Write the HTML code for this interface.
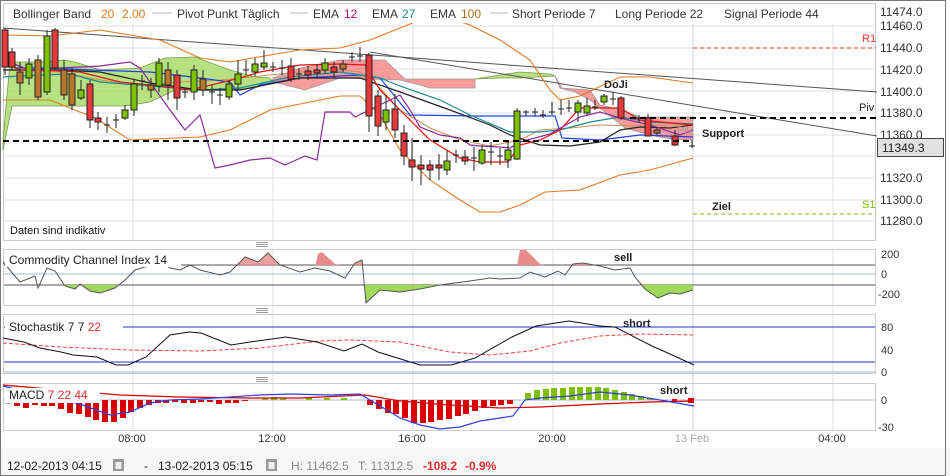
<!DOCTYPE html>
<html><head><meta charset="utf-8"><style>
html,body{margin:0;padding:0;background:#fff}
svg{display:block;font-family:"Liberation Sans",Arial,sans-serif}
</style></head><body>
<svg width="950" height="476" viewBox="0 0 950 476" xmlns="http://www.w3.org/2000/svg">
<rect x="0" y="0" width="950" height="476" fill="#fff"/>
<rect x="0" y="448" width="950" height="28" fill="#f6f6f6"/>
<rect x="0.5" y="0.5" width="945" height="475" fill="none" stroke="#777"/>
<rect x="3.5" y="3.5" width="872" height="237" fill="none" stroke="#ccc"/>
<g stroke="#e2e2e2" stroke-width="1">
<line x1="4" y1="26" x2="875" y2="26"/><line x1="4" y1="48" x2="875" y2="48"/><line x1="4" y1="69" x2="875" y2="69"/><line x1="4" y1="91" x2="875" y2="91"/><line x1="4" y1="113" x2="875" y2="113"/><line x1="4" y1="135" x2="875" y2="135"/><line x1="4" y1="156" x2="875" y2="156"/><line x1="4" y1="178" x2="875" y2="178"/><line x1="4" y1="200" x2="875" y2="200"/><line x1="4" y1="221" x2="875" y2="221"/>
<line x1="133" y1="24" x2="133" y2="240"/><line x1="273" y1="24" x2="273" y2="240"/><line x1="413" y1="24" x2="413" y2="240"/><line x1="553" y1="24" x2="553" y2="240"/><line x1="833" y1="24" x2="833" y2="240"/>
<line x1="133" y1="249" x2="133" y2="430"/><line x1="273" y1="249" x2="273" y2="430"/><line x1="413" y1="249" x2="413" y2="430"/><line x1="553" y1="249" x2="553" y2="430"/><line x1="833" y1="249" x2="833" y2="430"/>
</g>
<line x1="693" y1="24" x2="693" y2="430" stroke="#d0d0d0"/>
<polygon fill="#9fd85a" fill-opacity="0.75" stroke="#7a9a4a" stroke-width="0.8" points="3,140 10,62 40,62 65,60 75,62 100,70 140,68 150,64 165,58 195,57 230,70 255,77 270,78 273,82 255,88 230,90 200,90 175,90 150,102 125,106 12,106 3,150"/>
<polygon fill="#f47a7a" fill-opacity="0.75" stroke="#999" stroke-width="0.8" points="273,78 300,68 340,60 385,60 405,79 475,79 475,88 445,88 430,88 420,85 400,80 340,78 305,90 273,82"/>
<polygon fill="#9fd85a" fill-opacity="0.75" stroke="#7a9a4a" stroke-width="0.8" points="475,79 500,75 520,72 550,74 555,76 520,78 500,78"/>
<polygon fill="#f47a7a" fill-opacity="0.75" stroke="#999" stroke-width="0.8" points="555,76 562,88 590,90 600,105 622,110 640,117 693,117 693,140 670,139 650,135 625,128 605,112 590,100 575,92 560,88"/>
<line x1="3" y1="28" x2="877" y2="92" stroke="#555" stroke-width="1"/>
<line x1="370" y1="52" x2="877" y2="136" stroke="#555" stroke-width="1"/>
<g fill="none" stroke="#e07a20" stroke-width="1.1">
<polyline points="3,35 50,36 100,30 160,40 200,58 230,62 270,55 300,50 340,48 370,40 400,28 420,20 440,15 470,25 500,40 530,60 550,90 560,100 580,96 620,77 650,77 693,83"/>
<polyline points="3,100 50,100 95,118 130,140 200,137 230,130 270,110 300,104 340,96 360,96 380,115 400,150 430,180 460,200 480,212 500,212 520,205 545,192 580,190 620,175 650,170 693,158"/>
<polyline stroke="#c8945a" points="3,70 60,72 100,80 140,85 180,82 220,80 260,76 300,72 340,70 360,72 380,88 400,110 430,128 460,140 490,146 520,140 540,130 570,128 600,125 640,126 693,124"/>
</g>
<g fill="none" stroke-width="1.2">
<polyline stroke="#2040f0" points="3,50 15,68 50,68 90,70 150,72 200,78 230,82 240,95 260,85 300,78 360,75 380,78 410,115 475,116 555,116 562,138 600,140 640,135 693,137"/>
<polyline stroke="#1a8a90" points="3,77 40,75 70,74 100,82 150,86 200,90 240,88 290,77 340,72 380,78 400,86 440,100 470,115 510,132 540,132 560,130 590,122 620,117 650,122 693,124"/>
<polyline stroke="#222" points="3,70 60,70 100,72 150,83 200,90 240,90 270,84 300,78 360,78 400,92 450,110 490,125 510,135 540,145 570,146 600,142 620,130 640,127 670,128 693,125"/>
<polyline stroke="#f01010" points="3,62 20,70 40,70 80,72 120,82 160,86 190,90 240,78 260,72 300,65 340,64 365,65 380,90 400,110 430,140 460,158 480,162 508,162 520,145 540,140 560,130 580,108 620,108 640,120 693,125"/>
<polyline stroke="#8a2a9a" points="3,60 30,70 60,68 100,66 130,62 140,68 170,110 185,130 200,115 215,168 230,165 250,160 270,158 285,165 305,156 317,160 325,112 350,112 355,117 390,100 400,95 410,110 420,127 440,135 460,138 470,145 480,146 500,147 510,148 520,142 550,134 580,117 600,112 620,118 650,125 680,135 693,130"/>
</g>
<g stroke="#222" stroke-width="1">
<line x1="5" y1="28" x2="5" y2="75"/><rect x="2" y="30" width="6" height="37" fill="#e8383a"/>
<line x1="12" y1="48" x2="12" y2="70"/><rect x="9" y="52" width="6" height="15" fill="#e8383a"/>
<line x1="20" y1="62" x2="20" y2="95"/><rect x="17" y="72" width="6" height="11" fill="#b8762a"/>
<line x1="29" y1="58" x2="29" y2="85"/><rect x="26" y="64" width="6" height="14" fill="#7cc000"/>
<line x1="38" y1="55" x2="38" y2="100"/><rect x="35" y="60" width="6" height="37" fill="#b8762a"/>
<line x1="47" y1="30" x2="47" y2="95"/><rect x="44" y="36" width="6" height="56" fill="#7cc000"/>
<line x1="55" y1="28" x2="55" y2="70"/><rect x="52" y="30" width="6" height="38" fill="#e8383a"/>
<line x1="64" y1="60" x2="64" y2="100"/><rect x="61" y="70" width="6" height="25" fill="#b8762a"/>
<line x1="72" y1="68" x2="72" y2="110"/><rect x="69" y="74" width="6" height="31" fill="#b8762a"/>
<line x1="81" y1="80" x2="81" y2="100"/><rect x="78" y="90" width="6" height="8" fill="#7cc000"/>
<line x1="90" y1="80" x2="90" y2="128"/><rect x="87" y="84" width="6" height="36" fill="#e8383a"/>
<line x1="98" y1="112" x2="98" y2="130"/><rect x="95" y="118" width="6" height="4" fill="#e8383a"/>
<line x1="107" y1="117" x2="107" y2="133"/><line x1="104" y1="125" x2="110" y2="125"/>
<line x1="116" y1="114" x2="116" y2="128"/><line x1="113" y1="120" x2="119" y2="120"/>
<line x1="125" y1="105" x2="125" y2="120"/><rect x="122" y="110" width="6" height="8" fill="#7cc000"/>
<line x1="134" y1="80" x2="134" y2="116"/><rect x="131" y="84" width="6" height="26" fill="#7cc000"/>
<line x1="142" y1="75" x2="142" y2="90"/><line x1="139" y1="81" x2="145" y2="81"/>
<line x1="151" y1="78" x2="151" y2="98"/><rect x="148" y="85" width="6" height="5" fill="#b8762a"/>
<line x1="159" y1="58" x2="159" y2="92"/><rect x="156" y="63" width="6" height="23" fill="#7cc000"/>
<line x1="168" y1="62" x2="168" y2="100"/><rect x="165" y="70" width="6" height="15" fill="#b8762a"/>
<line x1="177" y1="70" x2="177" y2="110"/><rect x="174" y="75" width="6" height="23" fill="#e8383a"/>
<line x1="185" y1="88" x2="185" y2="98"/><line x1="182" y1="92" x2="188" y2="92"/>
<line x1="194" y1="65" x2="194" y2="100"/><rect x="191" y="70" width="6" height="22" fill="#7cc000"/>
<line x1="203" y1="70" x2="203" y2="96"/><rect x="200" y="79" width="6" height="11" fill="#b8762a"/>
<line x1="212" y1="85" x2="212" y2="104"/><line x1="209" y1="92" x2="215" y2="92"/>
<line x1="220" y1="88" x2="220" y2="105"/><line x1="217" y1="95" x2="223" y2="95"/>
<line x1="229" y1="80" x2="229" y2="100"/><rect x="226" y="84" width="6" height="13" fill="#7cc000"/>
<line x1="238" y1="60" x2="238" y2="90"/><rect x="235" y="74" width="6" height="10" fill="#7cc000"/>
<line x1="246" y1="60" x2="246" y2="75"/><line x1="243" y1="70" x2="249" y2="70"/>
<line x1="255" y1="58" x2="255" y2="76"/><rect x="252" y="64" width="6" height="8" fill="#7cc000"/>
<line x1="264" y1="50" x2="264" y2="70"/><rect x="261" y="63" width="6" height="4" fill="#7cc000"/>
<line x1="273" y1="62" x2="273" y2="72"/><line x1="270" y1="67" x2="276" y2="67"/>
<line x1="282" y1="60" x2="282" y2="75"/><line x1="279" y1="68" x2="285" y2="68"/>
<line x1="291" y1="58" x2="291" y2="82"/><rect x="288" y="66" width="6" height="13" fill="#e8383a"/>
<line x1="299" y1="68" x2="299" y2="80"/><line x1="296" y1="74" x2="302" y2="74"/>
<line x1="308" y1="66" x2="308" y2="80"/><rect x="305" y="71" width="6" height="4" fill="#e8383a"/>
<line x1="317" y1="64" x2="317" y2="77"/><rect x="314" y="70" width="6" height="3" fill="#e8383a"/>
<line x1="325" y1="58" x2="325" y2="74"/><rect x="322" y="63" width="6" height="7" fill="#7cc000"/>
<line x1="334" y1="62" x2="334" y2="78"/><rect x="331" y="67" width="6" height="5" fill="#e8383a"/>
<line x1="343" y1="60" x2="343" y2="72"/><rect x="340" y="64" width="6" height="5" fill="#b8762a"/>
<line x1="352" y1="52" x2="352" y2="62"/><line x1="349" y1="57" x2="355" y2="57"/>
<line x1="360" y1="47" x2="360" y2="62"/><line x1="357" y1="56" x2="363" y2="56"/>
<line x1="369" y1="53" x2="369" y2="132"/><rect x="366" y="55" width="6" height="61" fill="#e8383a"/>
<line x1="378" y1="90" x2="378" y2="136"/><rect x="375" y="96" width="6" height="30" fill="#e8383a"/>
<line x1="386" y1="95" x2="386" y2="130"/><rect x="383" y="110" width="6" height="12" fill="#7cc000"/>
<line x1="395" y1="94" x2="395" y2="138"/><rect x="392" y="109" width="6" height="21" fill="#e8383a"/>
<line x1="404" y1="125" x2="404" y2="165"/><rect x="401" y="133" width="6" height="23" fill="#e8383a"/>
<line x1="412" y1="138" x2="412" y2="181"/><rect x="409" y="160" width="6" height="7" fill="#e8383a"/>
<line x1="421" y1="155" x2="421" y2="185"/><rect x="418" y="165" width="6" height="4" fill="#e8383a"/>
<line x1="430" y1="160" x2="430" y2="180"/><rect x="427" y="165" width="6" height="5" fill="#e8383a"/>
<line x1="439" y1="154" x2="439" y2="180"/><rect x="436" y="165" width="6" height="3" fill="#e8383a"/>
<line x1="447" y1="150" x2="447" y2="175"/><rect x="444" y="161" width="6" height="9" fill="#7cc000"/>
<line x1="456" y1="150" x2="456" y2="163"/><line x1="453" y1="155" x2="459" y2="155"/>
<line x1="465" y1="150" x2="465" y2="165"/><rect x="462" y="157" width="6" height="4" fill="#e8383a"/>
<line x1="474" y1="147" x2="474" y2="171"/><line x1="471" y1="158" x2="477" y2="158"/>
<line x1="482" y1="145" x2="482" y2="165"/><rect x="479" y="150" width="6" height="13" fill="#7cc000"/>
<line x1="491" y1="142" x2="491" y2="165"/><line x1="488" y1="152" x2="494" y2="152"/>
<line x1="500" y1="148" x2="500" y2="165"/><line x1="497" y1="156" x2="503" y2="156"/>
<line x1="508" y1="142" x2="508" y2="168"/><rect x="505" y="150" width="6" height="10" fill="#7cc000"/>
<line x1="517" y1="108" x2="517" y2="160"/><rect x="514" y="111" width="6" height="48" fill="#7cc000"/>
<line x1="526" y1="110" x2="526" y2="116"/><line x1="523" y1="112" x2="529" y2="112"/>
<line x1="535" y1="108" x2="535" y2="116"/><line x1="532" y1="112" x2="538" y2="112"/>
<line x1="543" y1="110" x2="543" y2="118"/><line x1="540" y1="115" x2="546" y2="115"/>
<line x1="552" y1="102" x2="552" y2="115"/><line x1="549" y1="112" x2="555" y2="112"/>
<line x1="561" y1="100" x2="561" y2="115"/><line x1="558" y1="109" x2="564" y2="109"/>
<line x1="569" y1="100" x2="569" y2="112"/><line x1="566" y1="108" x2="572" y2="108"/>
<line x1="578" y1="100" x2="578" y2="122"/><rect x="575" y="103" width="6" height="9" fill="#7cc000"/>
<line x1="587" y1="98" x2="587" y2="115"/><rect x="584" y="106" width="6" height="7" fill="#7cc000"/>
<line x1="595" y1="100" x2="595" y2="110"/><line x1="592" y1="107" x2="598" y2="107"/>
<line x1="604" y1="94" x2="604" y2="105"/><rect x="601" y="96" width="6" height="6" fill="#7cc000"/>
<line x1="613" y1="92" x2="613" y2="105"/><line x1="610" y1="99" x2="616" y2="99"/>
<line x1="621" y1="96" x2="621" y2="120"/><rect x="618" y="98" width="6" height="20" fill="#e8383a"/>
<line x1="639" y1="115" x2="639" y2="122"/><line x1="636" y1="118" x2="642" y2="118"/>
<line x1="648" y1="114" x2="648" y2="136"/><rect x="645" y="118" width="6" height="18" fill="#e8383a"/>
<line x1="657" y1="127" x2="657" y2="135"/><rect x="654" y="130" width="6" height="3" fill="#b8762a"/>
<line x1="675" y1="130" x2="675" y2="146"/><rect x="672" y="136" width="6" height="9" fill="#e8383a"/>
<line x1="692" y1="140" x2="692" y2="148"/><line x1="689" y1="146" x2="695" y2="146"/>
</g>
<line x1="3" y1="141" x2="693" y2="141" stroke="#000" stroke-width="2" stroke-dasharray="6,4"/>
<line x1="630" y1="118" x2="876" y2="118" stroke="#000" stroke-width="2" stroke-dasharray="6,4"/>
<line x1="693" y1="48" x2="876" y2="48" stroke="#f03030" stroke-dasharray="4,3"/>
<line x1="693" y1="214" x2="876" y2="214" stroke="#7cc000" stroke-dasharray="4,3"/>
<g font-size="11">
<text x="862" y="42" fill="#f03030">R1</text>
<text x="859" y="111" fill="#222">Piv</text>
<text x="862" y="208" fill="#7cc000">S1</text>
<text x="677" y="134" fill="#999">Piv</text>
<text x="702" y="137" fill="#222" font-weight="bold">Support</text>
<text x="712" y="210" fill="#222" font-weight="bold">Ziel</text>
<text x="604" y="88" fill="#222" font-weight="bold">DoJi</text>
<text x="10" y="234" fill="#111">Daten sind indikativ</text>
</g>
<rect x="4" y="4" width="690" height="19" fill="#fff"/>
<g font-size="12" fill="#333">
<text x="13" y="18">Bollinger Band</text><text x="101" y="18" fill="#e07a20">20</text><text x="122" y="18" fill="#e07a20">2.00</text>
<line x1="152" y1="13" x2="172" y2="13" stroke="#bbb"/>
<text x="177" y="18">Pivot Punkt  Täglich</text>
<line x1="290" y1="13" x2="308" y2="13" stroke="#bbb"/>
<text x="313" y="18">EMA</text><text x="344" y="18" fill="#b01060">12</text>
<text x="372" y="18">EMA</text><text x="402" y="18" fill="#1a8a90">27</text>
<text x="430" y="18">EMA</text><text x="461" y="18" fill="#a86a20">100</text>
<line x1="490" y1="13" x2="508" y2="13" stroke="#bbb"/>
<text x="512" y="18">Short Periode  7</text>
<text x="615" y="18">Long Periode  22</text>
<text x="724" y="18">Signal Periode  44</text>
</g>
<g font-size="12" fill="#333">
<text x="880" y="16">11474.0</text><text x="880" y="30">11460.0</text><text x="880" y="52">11440.0</text><text x="880" y="74">11420.0</text><text x="880" y="96">11400.0</text><text x="880" y="117">11380.0</text><text x="880" y="139">11360.0</text><text x="880" y="182">11320.0</text><text x="880" y="204">11300.0</text><text x="880" y="225">11280.0</text>
</g>
<rect x="877.5" y="138.5" width="66" height="18" fill="#e2e2e2" stroke="#444"/>
<text x="882" y="152" font-size="12" fill="#222">11349.3</text>
<g stroke="#999" stroke-width="1"><line x1="256" y1="242.5" x2="268" y2="242.5"/><line x1="256" y1="244.5" x2="268" y2="244.5"/><line x1="256" y1="246.5" x2="268" y2="246.5"/>
<line x1="256" y1="308.5" x2="268" y2="308.5"/><line x1="256" y1="310.5" x2="268" y2="310.5"/><line x1="256" y1="312.5" x2="268" y2="312.5"/>
<line x1="256" y1="377.5" x2="268" y2="377.5"/><line x1="256" y1="379.5" x2="268" y2="379.5"/><line x1="256" y1="381.5" x2="268" y2="381.5"/></g>
<rect x="3.5" y="249.5" width="872" height="56" fill="none" stroke="#ccc"/>
<line x1="4" y1="274" x2="875" y2="274" stroke="#a8b8d8"/>
<line x1="4" y1="265" x2="875" y2="265" stroke="#555"/>
<line x1="4" y1="285" x2="875" y2="285" stroke="#555"/>
<defs>
<clipPath id="ab"><rect x="0" y="240" width="900" height="25"/></clipPath>
<clipPath id="be"><rect x="0" y="285" width="900" height="25"/></clipPath>
</defs>
<polygon clip-path="url(#ab)" fill="#e88a8a" fill-opacity="0.8" points="3,262 20,282 35,276 38,288 47,268 55,271 65,286 75,289 80,284 90,291 100,293 115,288 125,280 135,270 145,267 155,264 162,262 170,268 180,270 190,265 200,270 220,275 230,272 245,257 258,262 268,253 280,265 300,272 315,268 330,271 345,278 355,263 362,260 366,303 380,290 400,292 420,289 440,285 455,283 470,281 490,278 500,279 520,278 530,272 545,277 558,271 565,275 573,264 583,263 600,266 615,270 630,268 635,277 645,289 658,298 670,293 680,294 693,290 693,265 3,265"/>
<polygon clip-path="url(#ab)" fill="#e88a8a" points="315,268 318,254 322,252 335,264 345,266"/>
<polygon clip-path="url(#ab)" fill="#e88a8a" points="517,266 520,250 526,250 540,264 550,266"/>
<polygon clip-path="url(#be)" fill="#9fd85a" points="3,262 20,282 35,276 38,288 47,268 55,271 65,286 75,289 80,284 90,291 100,293 115,288 125,280 135,270 145,267 155,264 162,262 170,268 180,270 190,265 200,270 220,275 230,272 245,257 258,262 268,253 280,265 300,272 315,268 330,271 345,278 355,263 362,260 366,303 380,290 400,292 420,289 440,285 455,283 470,281 490,278 500,279 520,278 530,272 545,277 558,271 565,275 573,264 583,263 600,266 615,270 630,268 635,277 645,289 658,298 670,293 680,294 693,290 693,285 3,285"/>
<polyline fill="none" stroke="#555" stroke-width="1" points="3,262 20,282 35,276 38,288 47,268 55,271 65,286 75,289 80,284 90,291 100,293 115,288 125,280 135,270 145,267 155,264 162,262 170,268 180,270 190,265 200,270 220,275 230,272 245,257 258,262 268,253 280,265 300,272 315,268 330,271 345,278 355,263 362,260 366,303 380,290 400,292 420,289 440,285 455,283 470,281 490,278 500,279 520,278 530,272 545,277 558,271 565,275 573,264 583,263 600,266 615,270 630,268 635,277 645,289 658,298 670,293 680,294 693,290"/>
<rect x="5" y="252" width="176" height="15" fill="#fff"/>
<text x="9" y="264" font-size="12" fill="#222">Commodity Channel Index  14</text>
<text x="614" y="261" font-size="11" font-weight="bold" fill="#222">sell</text>
<g font-size="11" fill="#333"><text x="881" y="258">200</text><text x="881" y="278">0</text><text x="878" y="298">-200</text></g>
<rect x="3.5" y="314.5" width="872" height="59" fill="none" stroke="#ccc"/>
<line x1="4" y1="327" x2="875" y2="327" stroke="#2030d0"/>
<line x1="4" y1="362" x2="875" y2="362" stroke="#2030d0"/>
<line x1="4" y1="372" x2="875" y2="372" stroke="#a8b8d8"/>
<polyline fill="none" stroke="#f04040" stroke-dasharray="4,2" points="3,343 60,347 130,350 200,351 260,348 320,341 350,340 400,342 450,352 490,355 530,351 560,343 600,336 640,334 694,335"/>
<polyline fill="none" stroke="#111" points="3,338 24,342 40,348 61,352 73,355 97,357 116,365 128,365 146,357 170,335 189,332 201,333 231,345 250,342 286,337 317,342 344,351 362,344 378,352 420,365 451,365 475,358 512,337 536,326 569,321 600,326 615,327 652,346 670,354 694,365"/>
<rect x="5" y="320" width="118" height="15" fill="#fff"/>
<text x="9" y="331" font-size="12" fill="#222">Stochastik  7  7  <tspan fill="#e03030">22</tspan></text>
<text x="623" y="327" font-size="11" font-weight="bold" fill="#222">short</text>
<g font-size="11" fill="#333"><text x="881" y="331">80</text><text x="881" y="354">40</text><text x="881" y="376">0</text></g>
<rect x="3.5" y="383.5" width="872" height="47" fill="none" stroke="#ccc"/>
<line x1="4" y1="400" x2="875" y2="400" stroke="#a8b8d8"/>
<g fill="#d80000">
<rect x="5" y="400" width="6" height="4" fill="#f0a0a0"/><rect x="14" y="400" width="6" height="6"/><rect x="23" y="400" width="6" height="8"/><rect x="32" y="400" width="6" height="5"/><rect x="41" y="400" width="6" height="6"/><rect x="49" y="400" width="6" height="6"/><rect x="58" y="400" width="6" height="9"/><rect x="67" y="400" width="6" height="13"/><rect x="76" y="400" width="6" height="14"/><rect x="85" y="400" width="6" height="17"/><rect x="93" y="400" width="6" height="20"/><rect x="102" y="400" width="6" height="22"/><rect x="111" y="400" width="6" height="22"/><rect x="120" y="400" width="6" height="18"/><rect x="128" y="400" width="6" height="12"/><rect x="137" y="400" width="6" height="8"/><rect x="146" y="400" width="6" height="5"/><rect x="155" y="400" width="6" height="3"/><rect x="163" y="400" width="6" height="3"/><rect x="172" y="400" width="6" height="2"/><rect x="181" y="400" width="6" height="3"/><rect x="190" y="400" width="6" height="3"/><rect x="198" y="400" width="6" height="2"/><rect x="207" y="400" width="6" height="2"/><rect x="216" y="400" width="6" height="4"/><rect x="225" y="400" width="6" height="3"/><rect x="233" y="400" width="6" height="3"/><rect x="242" y="400" width="6" height="1"/>
<rect x="367" y="400" width="6" height="5"/><rect x="376" y="400" width="6" height="9"/><rect x="385" y="400" width="6" height="13"/><rect x="393" y="400" width="6" height="14"/><rect x="402" y="400" width="6" height="18"/><rect x="411" y="400" width="6" height="23"/><rect x="420" y="400" width="6" height="23"/><rect x="428" y="400" width="6" height="22"/><rect x="437" y="400" width="6" height="20"/><rect x="446" y="400" width="6" height="19"/><rect x="455" y="400" width="6" height="16"/><rect x="463" y="400" width="6" height="14"/><rect x="472" y="400" width="6" height="11"/><rect x="481" y="400" width="6" height="8"/><rect x="490" y="400" width="6" height="6"/><rect x="498" y="400" width="6" height="5"/><rect x="507" y="400" width="6" height="4"/>
<rect x="672" y="399" width="5" height="3"/><rect x="688" y="398" width="6" height="5"/>
</g>
<g fill="#7cc000">
<rect x="262" y="398" width="6" height="2"/><rect x="271" y="397" width="6" height="3"/><rect x="280" y="398" width="6" height="2"/><rect x="306" y="398" width="6" height="2"/><rect x="324" y="398" width="6" height="2"/><rect x="341" y="398" width="6" height="2"/>
<rect x="525" y="393" width="6" height="7"/><rect x="534" y="390" width="6" height="10"/><rect x="543" y="389" width="6" height="11"/><rect x="551" y="388" width="6" height="12"/><rect x="560" y="388" width="6" height="12"/><rect x="569" y="387" width="6" height="13"/><rect x="577" y="387" width="6" height="13"/><rect x="586" y="387" width="6" height="13"/><rect x="595" y="387" width="6" height="13"/><rect x="603" y="388" width="6" height="12"/><rect x="612" y="390" width="6" height="10"/><rect x="621" y="392" width="6" height="8"/><rect x="629" y="394" width="6" height="6"/><rect x="638" y="396" width="6" height="4"/><rect x="647" y="398" width="6" height="2"/>
</g>
<polyline fill="none" stroke="#d80000" stroke-width="1.2" points="3,385 60,390 120,395 180,397 250,398 300,398 365,395 400,401 450,405 500,408 540,407 600,404 650,402 694,401"/>
<polyline fill="none" stroke="#3040e0" stroke-width="1.2" points="3,386 40,395 80,404 110,415 130,412 150,403 170,400 200,399 260,395 290,394 330,395 360,394 380,406 400,418 420,425 440,429 460,427 480,421 500,418 513,416 525,400 540,398 570,396 600,392 630,395 660,400 694,406"/>
<rect x="5" y="388" width="95" height="15" fill="#fff"/>
<text x="9" y="399" font-size="12" fill="#222">MACD  <tspan fill="#e03030">7  22  44</tspan></text>
<text x="660" y="394" font-size="11" font-weight="bold" fill="#222">short</text>
<g font-size="11" fill="#333"><text x="881" y="404">0</text><text x="878" y="431">-30</text></g>
<g font-size="11" fill="#333" text-anchor="middle">
<text x="132" y="442">08:00</text><text x="272" y="442">12:00</text><text x="412" y="442">16:00</text><text x="552" y="442">20:00</text><text x="692" y="442" fill="#aaa">13 Feb</text><text x="832" y="442">04:00</text>
</g>
<g font-size="12" fill="#222">
<text x="7" y="470">12-02-2013 04:15</text>
<rect x="113" y="459" width="11" height="12" fill="#999"/><rect x="115.5" y="462" width="6" height="7" fill="#eee"/>
<text x="144" y="470">-</text>
<text x="158" y="470">13-02-2013 05:15</text>
<rect x="266" y="459" width="11" height="12" fill="#999"/><rect x="268.5" y="462" width="6" height="7" fill="#eee"/>
<text x="291" y="470" fill="#888">H: 11462.5</text>
<text x="358" y="470" fill="#888">T: 11312.5</text>
<text x="423" y="470" fill="#e03030" font-weight="bold">-108.2</text>
<text x="465" y="470" fill="#e03030" font-weight="bold">-0.9%</text>
</g>
</svg>
</body></html>
